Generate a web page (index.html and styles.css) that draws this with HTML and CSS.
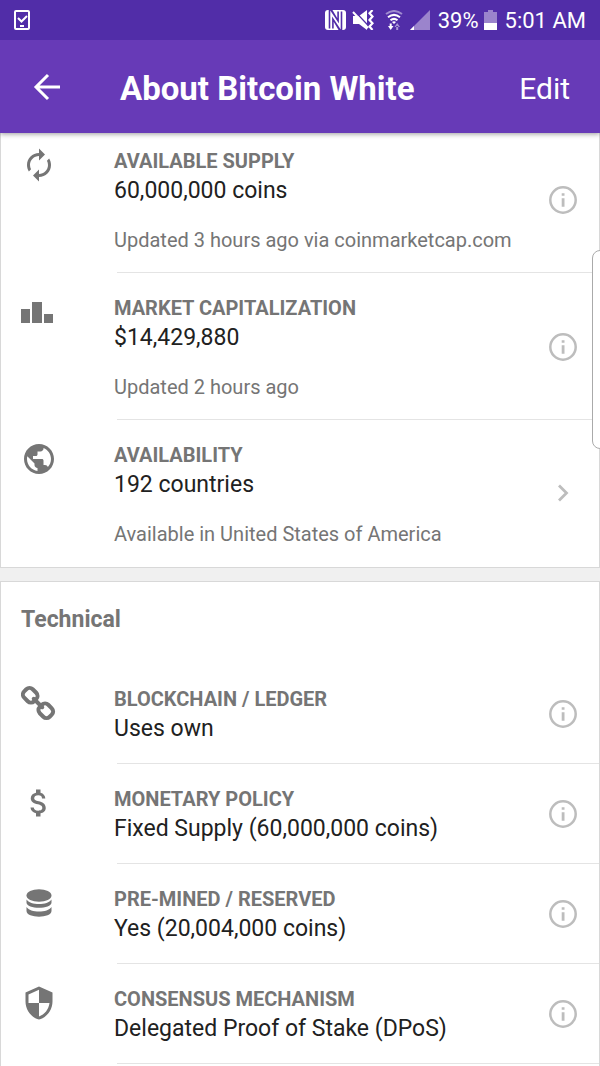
FILE: index.html
```html
<!DOCTYPE html>
<html lang="en">
<head>
  <meta charset="UTF-8">
  <meta name="viewport" content="width=device-width, initial-scale=1.0">
  <title>About Bitcoin White</title>
  <link rel="stylesheet" href="styles.css">
</head>
<body>
  <!-- shared icons -->
  <svg class="sprite" aria-hidden="true">
    <symbol id="info" viewBox="0 0 28 28">
      <circle cx="14" cy="14" r="12.700" fill="none" stroke="currentColor" stroke-width="2.500"/>
      <path fill="currentColor" d="M12.700 7.300h2.800v2.500h-2.800zM12.700 12.200h2.800v8.600h-2.800z"/>
    </symbol>
  </svg>

  <header class="header">
    <div class="status-bar">
      <svg class="status-task" width="16" height="20" viewBox="0 0 16 20" fill="none" stroke="#fff">
        <rect x="1" y="1" width="14" height="18" rx="1" stroke-width="2"/>
        <path d="M4 8l3.500 3.500 5.500-5.500" stroke-width="2"/>
        <path d="M6 16h4" stroke-width="2"/>
      </svg>
      <div class="status-icons">
        <svg width="21" height="20" viewBox="0 0 21 20">
          <rect width="21" height="20" rx="3" fill="#fff"/>
          <path d="M6.200 18.500V2.800L14.800 17.200V1.500" fill="none" stroke="#512da8" stroke-width="5"/>
          <path d="M6.200 20V3.500L14.800 16.500V0" fill="none" stroke="#fff" stroke-width="1.800"/>
        </svg>
        <svg class="status-mute" width="22" height="20" viewBox="0 0 22 20">
          <path fill="#fff" d="M1 6h6l8-6v20l-8-6H1z"/>
          <path d="M2 .500l15 16" stroke="#512da8" stroke-width="1.500"/>
          <path d="M1 2l15 16" stroke="#fff" stroke-width="2"/>
          <path d="M20.500 0l-3 3.300 3 3.300-3 3.400 3 3.300-3 3.300 3 3.400" fill="none" stroke="#fff" stroke-width="2.200"/>
        </svg>
        <svg class="status-wifi" width="18" height="20" viewBox="0 0 18 20" fill="none" stroke="#fff" stroke-width="2">
          <path d="M1 4q8-6 16 0" opacity=".45"/>
          <path d="M3 7.200q6-4.700 12 0M5.500 10.200q3.500-2.700 7 0"/>
          <path d="M7 12q2-1.400 4 0L9 14z" fill="#fff" stroke="none"/>
          <path d="M3 16h5.500L5.700 20zM4.700 13.500h2V17h-2z" fill="#fff" stroke="none"/>
          <path d="M9.500 17H15l-2.800-4zM11.200 16h2v4h-2z" fill="#fff" stroke="none" opacity=".5"/>
        </svg>
        <svg class="status-signal" width="20" height="20" viewBox="0 0 20 20">
          <path d="M0 20L20 0v20z" fill="#9b84cc"/>
          <path d="M0 20l4-4v4z" fill="#fff"/>
        </svg>
        <span class="status-percent">39%</span>
        <svg class="status-battery" width="13" height="20" viewBox="0 0 13 20">
          <path d="M0 2h4V0h5v2h4v18H0z" fill="#9b84cc"/>
          <path d="M0 13h13v7H0z" fill="#fff"/>
        </svg>
        <span>5:01 AM</span>
      </div>
    </div>
    <div class="app-bar">
      <button class="back" aria-label="Back">
        <svg width="28" height="28" viewBox="0 0 28 28" fill="none" stroke="#fff" stroke-width="3">
          <path d="M27 14H3M15 2L3 14l12 12"/>
        </svg>
      </button>
      <h1 class="title">About Bitcoin White</h1>
      <button class="edit">Edit</button>
    </div>
  </header>

  <main class="content">
    <section class="card">
      <div class="row">
        <svg class="icon" viewBox="0 0 24 24">
          <path d="M12 6v3l4-4-4-4v3c-4.420 0-8 3.580-8 8 0 1.570.460 3.030 1.240 4.260L6.700 14.800c-.450-.830-.700-1.790-.700-2.800 0-3.310 2.690-6 6-6zm6.760 1.740L17.300 9.200c.440.840.700 1.790.700 2.800 0 3.310-2.690 6-6 6v-3l-4 4 4 4v-3c4.420 0 8-3.580 8-8 0-1.570-.460-3.030-1.240-4.260z"/>
        </svg>
        <div class="text">
          <h3 class="label">AVAILABLE SUPPLY</h3>
          <p class="value">60,000,000 coins</p>
          <p class="note">Updated 3 hours ago via coinmarketcap.com</p>
        </div>
        <button class="action" aria-label="About available supply"><svg width="28" height="28"><use href="#info"/></svg></button>
      </div>
      <div class="row">
        <svg class="icon" viewBox="0 0 36 36">
          <path d="M0 15h9v14H0zM11 8h10v21H11zM23 20h9v9h-9z"/>
        </svg>
        <div class="text">
          <h3 class="label">MARKET CAPITALIZATION</h3>
          <p class="value">$14,429,880</p>
          <p class="note">Updated 2 hours ago</p>
        </div>
        <button class="action" aria-label="About market capitalization"><svg width="28" height="28"><use href="#info"/></svg></button>
      </div>
      <div class="row">
        <svg class="icon" viewBox="0 0 24 24">
          <path d="M12 2C6.480 2 2 6.480 2 12s4.480 10 10 10 10-4.480 10-10S17.520 2 12 2zm-1 17.930c-3.950-.490-7-3.850-7-7.930 0-.620.080-1.210.210-1.790L9 15v1c0 1.100.900 2 2 2v1.930zm6.900-2.540c-.260-.810-1-1.390-1.900-1.390h-1v-3c0-.550-.450-1-1-1H8v-2h2c.550 0 1-.450 1-1V7h2c1.100 0 2-.900 2-2v-.410c2.930 1.190 5 4.060 5 7.410 0 2.080-.800 3.970-2.100 5.390z"/>
        </svg>
        <div class="text">
          <h3 class="label">AVAILABILITY</h3>
          <p class="value">192 countries</p>
          <p class="note">Available in United States of America</p>
        </div>
        <button class="action" aria-label="Show countries">
          <svg width="28" height="28" viewBox="0 0 28 28" fill="none" stroke="currentColor" stroke-width="2.800">
            <path d="M10 5.500l7.500 7.500L10 20.500"/>
          </svg>
        </button>
      </div>
    </section>

    <section class="card card-last">
      <h2 class="section-title">Technical</h2>
      <div class="row">
        <svg class="icon" viewBox="0 0 36 36">
          <g fill="none" stroke="#757575" stroke-width="4" transform="rotate(45 17 18)">
            <rect x="-1" y="12" width="14" height="12" rx="4.500"/>
            <rect x="21" y="12" width="14" height="12" rx="4.500"/>
            <path d="M11 18h12" stroke-linecap="round"/>
          </g>
        </svg>
        <div class="text">
          <h3 class="label">BLOCKCHAIN / LEDGER</h3>
          <p class="value">Uses own</p>
        </div>
        <button class="action" aria-label="About blockchain"><svg width="28" height="28"><use href="#info"/></svg></button>
      </div>
      <div class="row">
        <svg class="icon" viewBox="0 0 24 24">
          <path d="M11.800 10.900c-2.270-.590-3-1.200-3-2.150 0-1.090 1.010-1.850 2.700-1.850 1.780 0 2.440.850 2.500 2.100h2.210c-.070-1.720-1.120-3.300-3.210-3.810V3h-3v2.160c-1.940.420-3.500 1.680-3.500 3.610 0 2.310 1.910 3.460 4.700 4.130 2.500.600 3 1.480 3 2.410 0 .690-.490 1.790-2.700 1.790-2.060 0-2.870-.920-2.980-2.100h-2.200c.120 2.190 1.760 3.420 3.680 3.830V21h3v-2.150c1.950-.370 3.500-1.500 3.500-3.550 0-2.840-2.430-3.810-4.700-4.400z"/>
        </svg>
        <div class="text">
          <h3 class="label">MONETARY POLICY</h3>
          <p class="value">Fixed Supply (60,000,000 coins)</p>
        </div>
        <button class="action" aria-label="About monetary policy"><svg width="28" height="28"><use href="#info"/></svg></button>
      </div>
      <div class="row">
        <svg class="icon" viewBox="0 0 36 36">
          <ellipse cx="18" cy="10.500" rx="12.500" ry="6.200"/>
          <path d="M5.500 14.500c2 3.200 7 4.500 12.500 4.500s10.500-1.300 12.500-4.500v3c0 7-25 7-25 0z"/>
          <path d="M5.500 22c2 3.200 7 4.500 12.500 4.500s10.500-1.300 12.500-4.500v4c0 7.500-25 7.500-25 0z"/>
        </svg>
        <div class="text">
          <h3 class="label">PRE-MINED / RESERVED</h3>
          <p class="value">Yes (20,004,000 coins)</p>
        </div>
        <button class="action" aria-label="About pre-mined coins"><svg width="28" height="28"><use href="#info"/></svg></button>
      </div>
      <div class="row">
        <svg class="icon" viewBox="0 0 24 24">
          <path d="M12 1L3 5v6c0 5.550 3.840 10.740 9 12 5.160-1.260 9-6.450 9-12V5l-9-4zm0 10.990h7c-.530 4.120-3.280 7.790-7 8.940V12H5V6.300l7-3.110v8.800z"/>
        </svg>
        <div class="text">
          <h3 class="label">CONSENSUS MECHANISM</h3>
          <p class="value">Delegated Proof of Stake (DPoS)</p>
        </div>
        <button class="action" aria-label="About consensus mechanism"><svg width="28" height="28"><use href="#info"/></svg></button>
      </div>
    </section>
  </main>

  <!-- edge panel handle -->
  <div class="edge-handle"></div>
</body>
</html>
```
FILE: styles.css
```css
* {
  box-sizing: border-box;
}
body {
  margin: 0;
  min-height: 100vh;
  display: flex;
  flex-direction: column;
  background: #f0f0f0;
  color: #212121;
  font-family: Roboto, "Liberation Sans", sans-serif;
}
h1, h2, h3, p {
  margin: 0;
}
button {
  padding: 0;
  border: none;
  background: none;
  font-family: inherit;
  cursor: pointer;
}
svg {
  display: block;
}
.sprite {
  position: absolute;
  width: 0;
  height: 0;
}

/* header */
.header {
  position: sticky;
  top: 0;
  z-index: 1;
  color: #fff;
  background: #673ab7;
  box-shadow: 0 1px 5px rgba(0, 0, 0, 0.4);
}
.status-bar {
  display: flex;
  justify-content: space-between;
  align-items: center;
  height: 40px;
  padding: 0 14px;
  background: #512da8;
  font-size: 22px;
}
.status-icons {
  display: flex;
  align-items: center;
}
.status-mute {
  margin-left: 6px;
}
.status-wifi {
  margin-left: 11px;
}
.status-signal {
  margin-left: 7px;
}
.status-percent {
  margin-left: 8px;
}
.status-battery {
  margin: 0 8px 0 5px;
}
.app-bar {
  display: flex;
  align-items: center;
  height: 93px;
  padding: 0 30px 0 33px;
}
.back {
  width: 87px;
  height: 48px;
}
.title {
  flex: 1;
  font-size: 33px;
  font-weight: 700;
  line-height: 48px;
  padding-top: 4px;
}
.edit {
  color: #fff;
  font-size: 30px;
  line-height: 48px;
  padding-top: 4px;
}

/* cards, first one sits partly under the header */
.content {
  flex: 1;
  display: flex;
  flex-direction: column;
  gap: 13px;
  margin-top: -8px;
}
.card {
  background: #fff;
  border: 1px solid #d8d8d8;
}
.card-last {
  flex: 1;
  border-bottom: none;
}
.section-title {
  padding: 22px 20px 28px;
  color: #757575;
  font-size: 23px;
  font-weight: 700;
  line-height: 32px;
}
.row {
  position: relative;
  display: flex;
  padding: 0 22px 0 20px;
}
.row::after {
  content: "";
  position: absolute;
  left: 116px;
  right: 0;
  bottom: 0;
  height: 1px;
  background: #e4e4e4;
}
.card:first-child .row:last-child::after {
  display: none;
}
.icon {
  width: 36px;
  height: 36px;
  margin: 21px 57px 0 0;
  fill: #757575;
}
.text {
  flex: 1;
  padding: 24px 0 16px;
}
.label {
  color: #757575;
  font-size: 20px;
  font-weight: 700;
  line-height: 22px;
}
.value {
  font-size: 23px;
  line-height: 38px;
}
.note {
  margin: 18px 0 5px;
  color: #757575;
  font-size: 20px;
  line-height: 24px;
}
.action {
  align-self: center;
  color: #bdbdbd;
}

.edge-handle {
  position: fixed;
  z-index: 1;
  top: 250px;
  right: -1px;
  width: 9px;
  height: 199px;
  background: #fff;
  border: 1px solid #aaa;
  border-radius: 8px 0 0 8px;
}
```
